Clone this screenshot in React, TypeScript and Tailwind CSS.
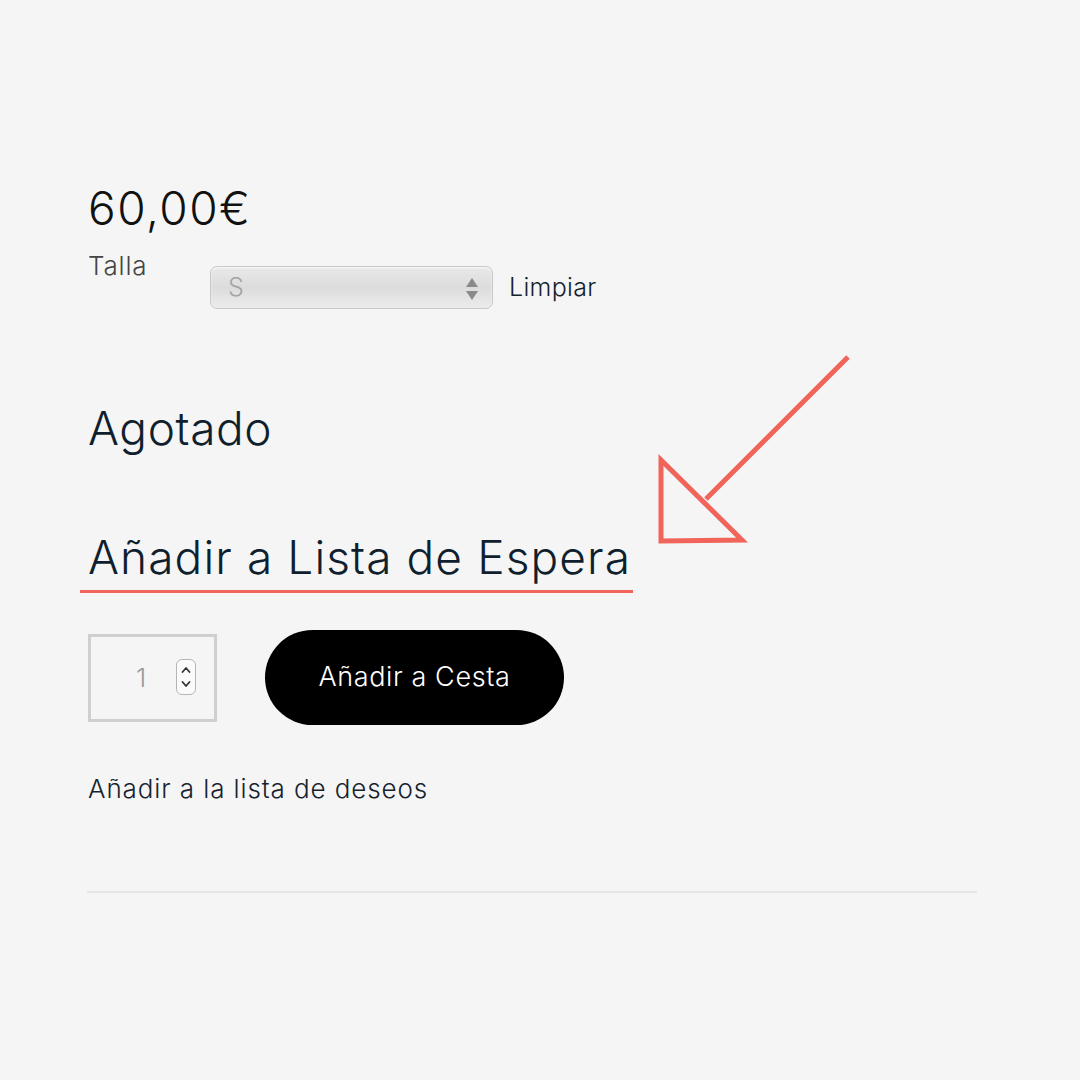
import React from "react";

const App: React.FC = () => {
  return (
    <div
      className="relative w-[1080px] h-[1080px] bg-[#f5f5f5] overflow-hidden"
      style={{ fontFamily: "Inter, 'Noto Sans', sans-serif" }}
    >
      <div className="pl-[88px] pt-[180px] w-[977px]">
        {/* Price */}
        <div className="text-[46px] leading-[56px] font-light text-[#111] tracking-[1.5px]">60,00€</div>

        {/* Size selector */}
        <div className="flex items-start mt-[14px]">
          <span className="w-[122px] text-[26px] leading-[32px] font-light text-[#444] tracking-[0.8px]">Talla</span>
          <div className="flex items-center mt-[16px]">
            <div className="relative w-[283px] h-[43px] rounded-[7px] border border-[#c8c8c8] bg-gradient-to-b from-[#e9e9e9] via-[#dcdcdc] to-[#ececec] shadow-[inset_0_1px_2px_rgba(255,255,255,0.8)] flex items-center pl-[17px]">
              <span className="text-[25px] font-light text-[#a5a5a5]">S</span>
              <svg className="absolute right-[13px] top-[10px]" width="14" height="24" viewBox="0 0 14 24">
                <path d="M7 1 L13 10 L1 10 Z" fill="#8a8a8a" />
                <path d="M1 14 L13 14 L7 23 Z" fill="#8a8a8a" />
              </svg>
            </div>
            <span className="ml-[16px] text-[25px] font-light text-[#16222e] tracking-[0.3px]">Limpiar</span>
          </div>
        </div>

        {/* Stock */}
        <div className="mt-[91px] text-[46px] leading-[56px] font-light text-[#0f1f2e] tracking-[0.6px]">Agotado</div>

        {/* Waitlist */}
        <div className="mt-[73px] -ml-[8px] w-[553px] pl-[8px] pb-[5px] border-b-[3px] border-[#f0645a]">
          <span className="text-[46px] leading-[56px] font-light text-[#0f1f2e] tracking-[1.1px]">
            Añadir a Lista de Espera
          </span>
        </div>

        {/* Quantity + cart */}
        <div className="flex items-center mt-[37px]">
          <div className="relative w-[129px] h-[88px] border-[3px] border-[#cfcfcf] flex items-center">
            <span className="ml-[45px] text-[26px] font-light text-[#9a9a9a]">1</span>
            <div className="absolute left-[85px] top-[22px] w-[20px] h-[36px] rounded-[6px] border border-[#b5b5b5] bg-[#fbfbfb] flex flex-col items-center justify-center">
              <svg width="12" height="28" viewBox="0 0 12 28">
                <path d="M2.5 9 L6 5 L9.5 9" fill="none" stroke="#333" strokeWidth="1.8" strokeLinecap="round" strokeLinejoin="round" />
                <path d="M2.5 19 L6 23 L9.5 19" fill="none" stroke="#333" strokeWidth="1.8" strokeLinecap="round" strokeLinejoin="round" />
              </svg>
            </div>
          </div>
          <button className="ml-[48px] w-[299px] h-[95px] rounded-full bg-black text-white text-[27px] font-light tracking-[0.6px]">
            Añadir a Cesta
          </button>
        </div>

        {/* Wishlist */}
        <div className="mt-[48px] text-[26px] leading-[32px] font-light text-[#16222e] tracking-[0.9px]">Añadir a la lista de deseos</div>

        <div className="mt-[86px] h-[2px] bg-[#e6e6e6] w-[890px] -ml-[1px]" />
      </div>

      {/* Annotation arrow */}
      <svg className="absolute left-0 top-0 pointer-events-none" width="1080" height="1080">
        <line x1="848" y1="357" x2="706" y2="499" stroke="#f0645a" strokeWidth="5" />
        <path d="M661 460 L661 541 L742 540 Z" fill="none" stroke="#f0645a" strokeWidth="5" strokeLinejoin="miter" />
      </svg>
    </div>
  );
};

export default App;
